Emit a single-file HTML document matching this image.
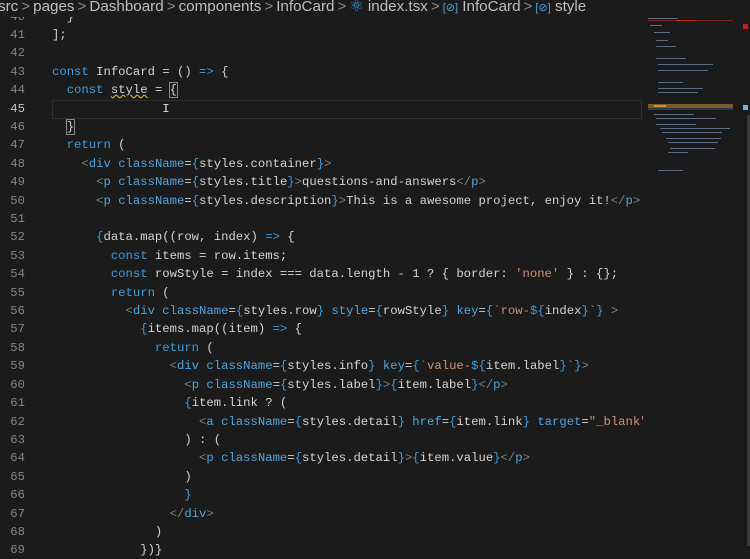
<!DOCTYPE html>
<html><head><meta charset="utf-8"><style>
body{margin:0;width:750px;height:546px;background:#1b1b1b;overflow:hidden;position:relative;font-family:"Liberation Mono",monospace}
.bc{position:absolute;top:-3px;left:-2px;height:20px;font:15.2px "Liberation Sans",sans-serif;color:#bfbfbf;white-space:nowrap;background:#1b1b1b;z-index:3;line-height:19px}
.bc .sep{color:#8a8a8a;margin:0 3px}
.bc .ic{color:#4aa3df;font-size:11px}
.ln{position:absolute;left:0;width:25px;text-align:right;font-size:12.25px;color:#858585;line-height:18px}
.ln.cur{color:#c6c6c6}
.cd{position:absolute;left:52px;font-size:12.25px;color:#d4d4d4;white-space:pre;line-height:18px;width:591px;overflow:hidden}
.k{color:#3e9ddb}.t{color:#4ea6dd}.g{color:#808080}.s{color:#ce9178}.b{color:#3e9ddb}
.curl{position:absolute;left:52px;top:100px;width:588px;height:17px;border:1px solid #2e2e2e}
.mm{position:absolute;left:646px;top:0;width:100px;height:546px;background:#1a1a1a}
.ml{position:absolute;height:1px;background:#5a6a80}
</style></head><body>
<div class="bc">src<span class="sep">&gt;</span>pages<span class="sep">&gt;</span>Dashboard<span class="sep">&gt;</span>components<span class="sep">&gt;</span>InfoCard<span class="sep">&gt;</span><span class="ic" style="font-size:16px">⚛</span> index.tsx<span class="sep">&gt;</span><span class="ic">[⊘]</span> InfoCard<span class="sep">&gt;</span><span class="ic">[⊘]</span> style</div>
<div class="curl"></div>

<div class="ln" style="top:8px">40</div><div class="cd" style="top:8px">  }</div>
<div class="ln" style="top:26px">41</div><div class="cd" style="top:26px">];</div>
<div class="ln" style="top:44px">42</div>
<div class="ln" style="top:63px">43</div><div class="cd" style="top:63px"><span class="k">const</span> InfoCard = () <span class="k">=&gt;</span> {</div>
<div class="ln" style="top:81px">44</div><div class="cd" style="top:81px">  <span class="k">const</span> <span style="text-decoration:underline wavy #d7a31c">style</span> = <span style="outline:1px solid #888">{</span></div>
<div class="ln cur" style="top:100px">45</div><div class="cd" style="top:100px">               <span style="color:#ddd">I</span></div>
<div class="ln" style="top:118px">46</div><div class="cd" style="top:118px">  <span style="outline:1px solid #888">}</span></div>
<div class="ln" style="top:136px">47</div><div class="cd" style="top:136px">  <span class="k">return</span> (</div>
<div class="ln" style="top:155px">48</div><div class="cd" style="top:155px">    <span class="g">&lt;</span><span class="t">div</span> <span class="t">className</span>=<span class="b">{</span>styles.container<span class="b">}</span><span class="g">&gt;</span></div>
<div class="ln" style="top:173px">49</div><div class="cd" style="top:173px">      <span class="g">&lt;</span><span class="t">p</span> <span class="t">className</span>=<span class="b">{</span>styles.title<span class="b">}</span><span class="g">&gt;</span>questions-and-answers<span class="g">&lt;/</span><span class="t">p</span><span class="g">&gt;</span></div>
<div class="ln" style="top:192px">50</div><div class="cd" style="top:192px">      <span class="g">&lt;</span><span class="t">p</span> <span class="t">className</span>=<span class="b">{</span>styles.description<span class="b">}</span><span class="g">&gt;</span>This is a awesome project, enjoy it!<span class="g">&lt;/</span><span class="t">p</span><span class="g">&gt;</span></div>
<div class="ln" style="top:210px">51</div>
<div class="ln" style="top:228px">52</div><div class="cd" style="top:228px">      <span class="b">{</span>data.map((row, index) <span class="k">=&gt;</span> {</div>
<div class="ln" style="top:247px">53</div><div class="cd" style="top:247px">        <span class="k">const</span> items = row.items;</div>
<div class="ln" style="top:265px">54</div><div class="cd" style="top:265px">        <span class="k">const</span> rowStyle = index === data.length - 1 ? { border: <span class="s">'none'</span> } : {};</div>
<div class="ln" style="top:284px">55</div><div class="cd" style="top:284px">        <span class="k">return</span> (</div>
<div class="ln" style="top:302px">56</div><div class="cd" style="top:302px">          <span class="g">&lt;</span><span class="t">div</span> <span class="t">className</span>=<span class="b">{</span>styles.row<span class="b">}</span> <span class="t">style</span>=<span class="b">{</span>rowStyle<span class="b">}</span> <span class="t">key</span>=<span class="b">{</span><span class="s">`row-</span><span class="b">${</span>index<span class="b">}</span><span class="s">`</span><span class="b">}</span> <span class="g">&gt;</span></div>
<div class="ln" style="top:320px">57</div><div class="cd" style="top:320px">            <span class="b">{</span>items.map((item) <span class="k">=&gt;</span> {</div>
<div class="ln" style="top:339px">58</div><div class="cd" style="top:339px">              <span class="k">return</span> (</div>
<div class="ln" style="top:357px">59</div><div class="cd" style="top:357px">                <span class="g">&lt;</span><span class="t">div</span> <span class="t">className</span>=<span class="b">{</span>styles.info<span class="b">}</span> <span class="t">key</span>=<span class="b">{</span><span class="s">`value-</span><span class="b">${</span>item.label<span class="b">}</span><span class="s">`</span><span class="b">}</span><span class="g">&gt;</span></div>
<div class="ln" style="top:376px">60</div><div class="cd" style="top:376px">                  <span class="g">&lt;</span><span class="t">p</span> <span class="t">className</span>=<span class="b">{</span>styles.label<span class="b">}</span><span class="g">&gt;</span><span class="b">{</span>item.label<span class="b">}</span><span class="g">&lt;/</span><span class="t">p</span><span class="g">&gt;</span></div>
<div class="ln" style="top:394px">61</div><div class="cd" style="top:394px">                  <span class="b">{</span>item.link ? (</div>
<div class="ln" style="top:413px">62</div><div class="cd" style="top:413px">                    <span class="g">&lt;</span><span class="t">a</span> <span class="t">className</span>=<span class="b">{</span>styles.detail<span class="b">}</span> <span class="t">href</span>=<span class="b">{</span>item.link<span class="b">}</span> <span class="t">target</span>=<span class="s">"_blank"</span></div>
<div class="ln" style="top:431px">63</div><div class="cd" style="top:431px">                  ) : (</div>
<div class="ln" style="top:449px">64</div><div class="cd" style="top:449px">                    <span class="g">&lt;</span><span class="t">p</span> <span class="t">className</span>=<span class="b">{</span>styles.detail<span class="b">}</span><span class="g">&gt;</span><span class="b">{</span>item.value<span class="b">}</span><span class="g">&lt;/</span><span class="t">p</span><span class="g">&gt;</span></div>
<div class="ln" style="top:468px">65</div><div class="cd" style="top:468px">                  )</div>
<div class="ln" style="top:486px">66</div><div class="cd" style="top:486px">                  <span class="b">}</span></div>
<div class="ln" style="top:505px">67</div><div class="cd" style="top:505px">                <span class="g">&lt;/</span><span class="t">div</span><span class="g">&gt;</span></div>
<div class="ln" style="top:523px">68</div><div class="cd" style="top:523px">              )</div>
<div class="ln" style="top:541px">69</div><div class="cd" style="top:541px">            })}</div>

<div class="mm">
<div class="ml" style="left:2px;top:18px;width:30px"></div>
<div class="ml" style="left:2px;top:20px;width:85px;background:#7a2020"></div>
<div class="ml" style="left:30px;top:20px;width:20px;background:#c02020"></div>
<div class="ml" style="left:4px;top:25px;width:12px"></div>
<div class="ml" style="left:8px;top:32px;width:16px"></div>
<div class="ml" style="left:10px;top:40px;width:12px"></div>
<div class="ml" style="left:10px;top:46px;width:20px"></div>
<div class="ml" style="left:10px;top:58px;width:30px"></div>
<div class="ml" style="left:12px;top:64px;width:55px"></div>
<div class="ml" style="left:12px;top:70px;width:50px"></div>
<div class="ml" style="left:12px;top:82px;width:25px"></div>
<div class="ml" style="left:12px;top:88px;width:45px"></div>
<div class="ml" style="left:12px;top:92px;width:40px"></div>
<div style="position:absolute;left:2px;top:104px;width:85px;height:4px;background:#7a5a2a"></div>
<div style="position:absolute;left:8px;top:105px;width:12px;height:2px;background:#d09020"></div>
<div class="ml" style="left:2px;top:108px;width:85px;background:#2a3a50;height:2px"></div>
<div class="ml" style="left:8px;top:114px;width:40px"></div>
<div class="ml" style="left:10px;top:118px;width:60px"></div>
<div class="ml" style="left:10px;top:124px;width:40px"></div>
<div class="ml" style="left:14px;top:128px;width:70px"></div>
<div class="ml" style="left:16px;top:132px;width:60px"></div>
<div class="ml" style="left:20px;top:138px;width:55px"></div>
<div class="ml" style="left:22px;top:142px;width:50px"></div>
<div class="ml" style="left:24px;top:148px;width:45px"></div>
<div class="ml" style="left:22px;top:152px;width:20px"></div>
<div class="ml" style="left:12px;top:170px;width:25px"></div>
</div>
<div style="position:absolute;left:743px;top:24px;width:5px;height:5px;background:#c02020"></div>
<div style="position:absolute;left:743px;top:105px;width:5px;height:5px;background:#6fb2e8"></div>
<div style="position:absolute;left:747px;top:115px;width:3px;height:431px;background:#3a3a3a"></div>
</body></html>
